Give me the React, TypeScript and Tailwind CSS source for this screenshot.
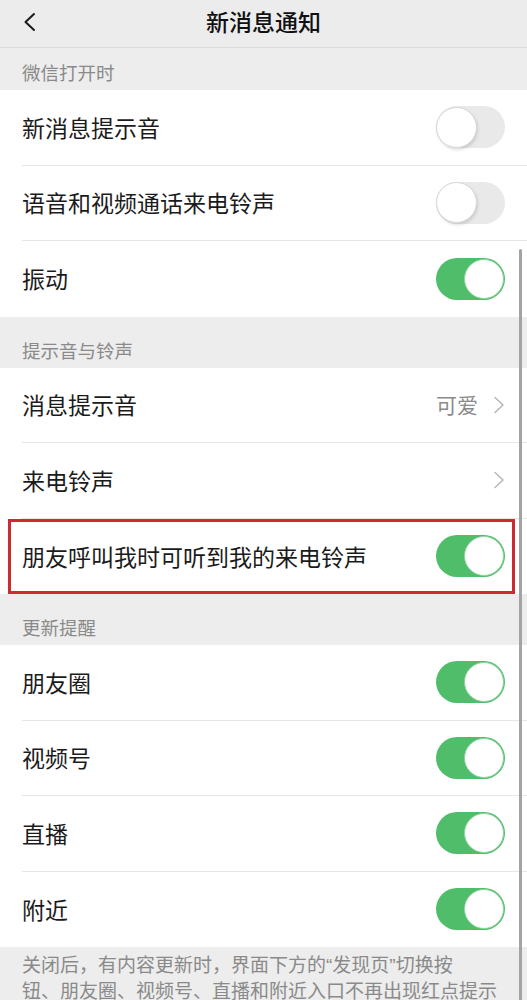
import React from "react";

const FONT = { fontFamily: '"Noto Sans CJK SC", "Noto Sans", sans-serif' };

function Toggle({ on }: { on: boolean }) {
  if (on) {
    return (
      <div className="relative w-[69px] h-[42px] rounded-full bg-[#4fbd69] shrink-0">
        <div className="absolute right-[1px] top-[1px] w-[40px] h-[40px] rounded-full bg-white border-[1.5px] border-[#8fd3a0]" />
      </div>
    );
  }
  return (
    <div className="relative w-[69px] h-[42px] rounded-full bg-[#e9e9e9] shrink-0">
      <div className="absolute left-0 top-[0.5px] w-[41px] h-[41px] rounded-full bg-white border border-[#d6d6d6] shadow-[1px_2px_3px_rgba(0,0,0,0.12)]" />
    </div>
  );
}

function Chevron() {
  return (
    <svg width="12" height="18" viewBox="0 0 12 18" className="shrink-0">
      <path d="M2 1.5 L10 9 L2 16.5" fill="none" stroke="#b8b8b8" strokeWidth="1.6" strokeLinecap="round" strokeLinejoin="round" />
    </svg>
  );
}

function Row({
  label,
  right,
  last,
  highlight,
}: {
  label: string;
  right: React.ReactNode;
  last?: boolean;
  highlight?: boolean;
}) {
  return (
    <div className="relative h-[75.5px] pl-[22px] bg-white">
      <div
        className={
          "flex items-center justify-between h-full pr-[22px] " +
          (last ? "" : "border-b border-[#e6e6e6]")
        }
      >
        <span className="text-[23px] text-[#1b1b1b] leading-none">{label}</span>
        {right}
      </div>
      {highlight && (
        <div className="absolute left-[8px] right-[12px] top-0 bottom-0 border-[3px] border-[#cf2a31]" />
      )}
    </div>
  );
}

function Section({ title, h }: { title: string; h: string }) {
  return (
    <div className={"flex items-end pl-[22px] pb-[9px] bg-[#ededed] " + h}>
      <span className="text-[18.5px] text-[#8a8a8a] leading-[18px]">{title}</span>
    </div>
  );
}

export default function App() {
  return (
    <div className="relative w-[527px] h-[1000px] overflow-hidden bg-[#ededed]" style={FONT}>
      {/* Header */}
      <div className="relative flex items-center justify-center h-[48px] bg-[#ececec] border-b border-[#dcdcdc]">
        <div className="absolute left-[22px] top-[12px]">
          <svg width="16" height="20" viewBox="0 0 16 20">
            <path d="M12 2 L3.5 10 L12 18" fill="none" stroke="#1a1a1a" strokeWidth="2" strokeLinecap="round" strokeLinejoin="round" />
          </svg>
        </div>
        <span className="text-[23px] font-medium text-[#111] leading-none -mt-[4px]">新消息通知</span>
      </div>

      <Section title="微信打开时" h="h-[42px]" />
      <Row label="新消息提示音" right={<Toggle on={false} />} />
      <Row label="语音和视频通话来电铃声" right={<Toggle on={false} />} />
      <Row label="振动" right={<Toggle on={true} />} last />

      <Section title="提示音与铃声" h="h-[51px]" />
      <Row
        label="消息提示音"
        right={
          <div className="flex items-center gap-[15px]">
            <span className="text-[21px] text-[#8a8a8a] leading-none">可爱</span>
            <Chevron />
          </div>
        }
      />
      <Row label="来电铃声" right={<Chevron />} />
      <Row label="朋友呼叫我时可听到我的来电铃声" right={<Toggle on={true} />} last highlight />

      <Section title="更新提醒" h="h-[51px]" />
      <Row label="朋友圈" right={<Toggle on={true} />} />
      <Row label="视频号" right={<Toggle on={true} />} />
      <Row label="直播" right={<Toggle on={true} />} />
      <Row label="附近" right={<Toggle on={true} />} last />

      <div className="pl-[22px] pt-[5px] text-[19px] leading-[24px] text-[#8a8a8a] whitespace-nowrap">
        <div>
          关闭后，有内容更新时，界面下方的<span style={{ fontFamily: '"Liberation Sans", sans-serif' }}>“</span>发现页<span style={{ fontFamily: '"Liberation Sans", sans-serif' }}>”</span>切换按
        </div>
        <div>钮、朋友圈、视频号、直播和附近入口不再出现红点提示</div>
      </div>

      {/* scroll indicator */}
      <div className="absolute left-[519px] top-[249px] w-[3px] h-[760px] rounded-full bg-[#a3a3a3]" />
    </div>
  );
}
